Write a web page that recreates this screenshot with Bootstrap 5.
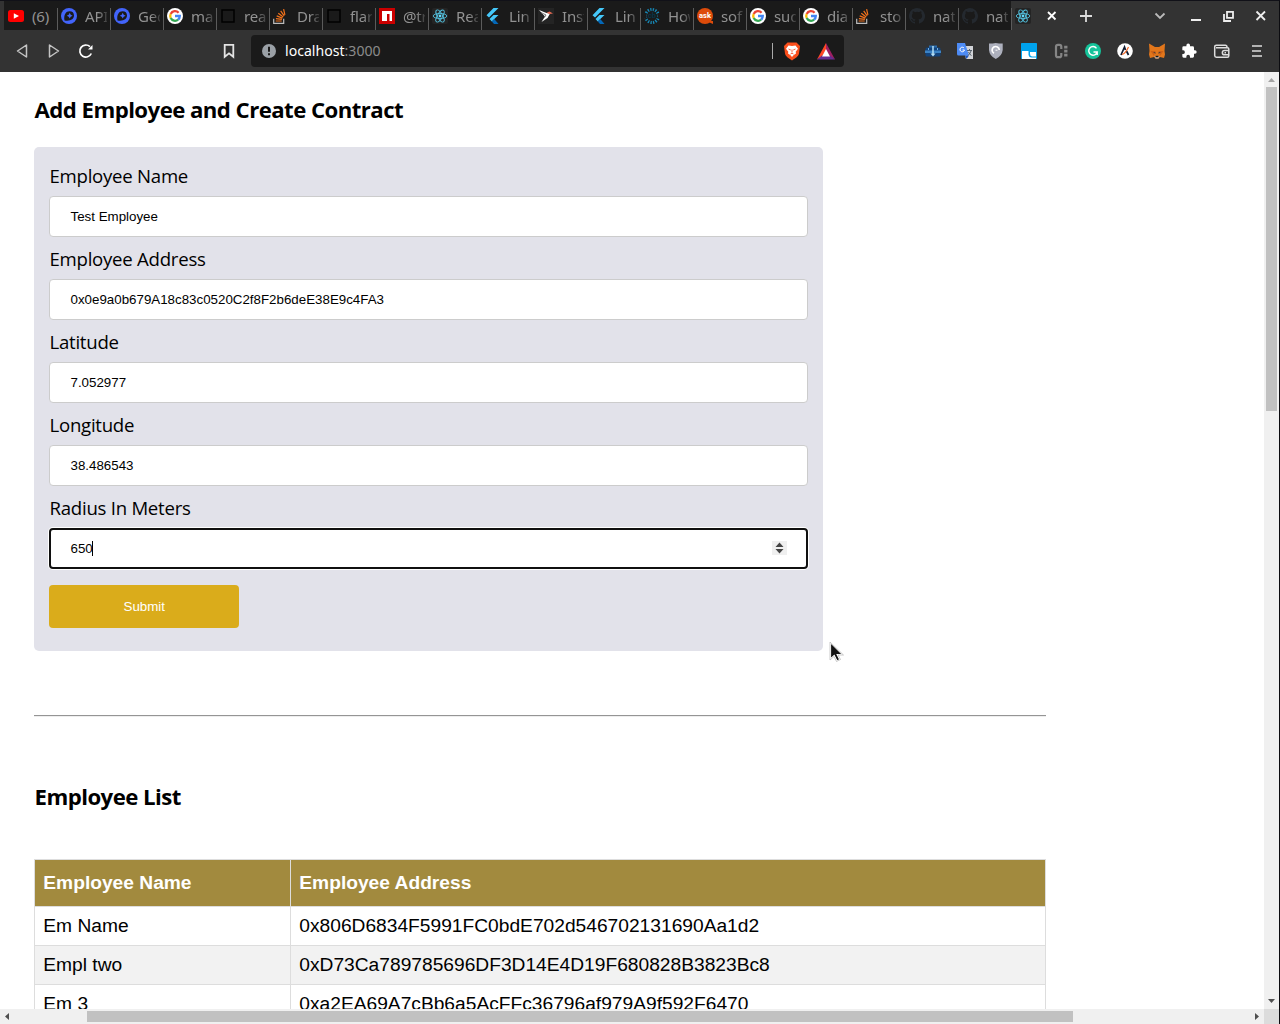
<!DOCTYPE html>
<html lang="en">
<head>
<meta charset="utf-8">
<title>Employee contracts</title>
<link href="https://cdn.jsdelivr.net/npm/bootstrap@5.3.0/dist/css/bootstrap.min.css" rel="stylesheet">
<style>
body{width:1280px;height:1024px;overflow:hidden;background:#333;color:#000;font-family:"Noto Sans",sans-serif}
svg{display:block;flex:none}
.screen{width:1280px;height:1024px;border-top:1px solid #111118;border-right:1px solid #0c0c10}
.tabstrip{height:29px;padding-left:4px;background:#333}
.tabitem{width:53px;height:29px;background:#1a1a1a;padding-left:4px;position:relative;color:#929292;font-size:15px;letter-spacing:-.15px;line-height:28px}
.tabitem:not(:last-child)::after{content:"";position:absolute;right:-1px;top:7px;width:1px;height:22px;background:#5b5b5b;z-index:1}
.tabtext{width:22px;margin-left:8px;overflow:hidden;white-space:nowrap;-webkit-mask-image:linear-gradient(90deg,#000 60%,rgba(0,0,0,.25))}
.tabtext.whole{-webkit-mask-image:none}
.activetab{padding-left:4px;width:268px;height:29px}
.toolbar{height:42px;background:#333}
.address{width:593px;height:32px;margin-left:14px;background:#1a1a1a;border-radius:4px;color:#fff;font-size:14.1px;padding-left:10px}
.address b{font-weight:400;color:#8b8b8b}
.extensions{gap:16px;margin-left:81px}
.viewport{height:937px;background:#fff}
.pagearea{padding:0 0 0 34px;overflow:hidden;width:1264px}
.pagearea h2{font:700 22.2px/30px "Open Sans","Noto Sans",sans-serif;margin:0;padding-left:.6px;white-space:nowrap;letter-spacing:-.55px}
.t1{padding-top:23px!important}
.panel{width:789px;height:504px;margin-top:22px;background:#e2e2ea;border-radius:5px;padding:16px 15px}
.panel label{display:block;font:400 18.6px/26px "Open Sans","Noto Sans",sans-serif;letter-spacing:-.25px;height:26px;margin-bottom:7px;padding-left:.5px}
.field{height:41px;border:1px solid #ccc;border-radius:4px;padding:0 20.5px;margin-bottom:9px;background:#fff;font:13.333px/39px "Liberation Sans",Arial,sans-serif;color:#000}
.field.focused{border:2px solid #101010;padding:0 19.5px;box-shadow:0 0 0 1px #fff}
.caret{width:1px;height:15px;background:#000;margin-left:-1px}
.spin{width:15px;height:14px;background:#efefef;margin-bottom:1px}
.btn-submit{width:190px;height:43px;margin-top:16px;background:#daac1b;color:#fff;border:0;border-radius:4px;padding:0 0 0 .5px;font:13.333px "Liberation Sans",Arial,sans-serif}
.rule{width:1012px;height:2px;margin-top:64px;border-top:1px solid #959595;border-bottom:1px solid #eee}
.t2{margin-top:65px!important}
.emps{width:1012px;margin:47px 0 0;border-collapse:collapse;table-layout:fixed;font:19.2px/22px "Liberation Sans",Arial,sans-serif}
.emps th,.emps td{border:1px solid #ddd;padding:8px 8px 8px 8.3px}
.emps th{background:#a28a3e;color:#fff;padding:12px 8px 12px 8.3px;height:47px}
.emps td{height:39px}
.emps tr:nth-child(even) td{background:#f2f2f2}
.vbar{width:15px;background:#f0f0f0}
.vthumb{width:11px;height:324px;background:#c1c1c1;margin:0 2px}
.hbar{height:15px;background:#f0f0f0}
.pointer{position:absolute;left:829px;top:641px}
.favicon{position:relative;width:16px;height:16px;flex:none}
.favicon span{position:absolute;inset:0;text-align:center;font:700 7.5px/15px Roboto,sans-serif;letter-spacing:0}
.cbtext{color:#073546}
</style>
<script src="https://cdn.jsdelivr.net/npm/bootstrap@5.3.0/dist/js/bootstrap.bundle.min.js"></script>
</head>
<body>
<svg width="0" height="0" class="position-absolute">
<symbol id="yt" viewBox="0 0 16 16"><rect y="2" width="16" height="12" rx="2.500" fill="#f00"/><path d="M5.800 5.200v5.600L11 8z" fill="#fff"/></symbol>
<symbol id="api" viewBox="0 0 16 16"><circle cx="8" cy="8" r="8" fill="#4264fb"/><path d="M3.500 12.500C2.500 6.500 5 3.200 8.600 3.200a4.400 4.400 0 0 1 4.400 4.300C13 11 9.500 13.500 3.500 12.500z" fill="#1a1a1a"/><path d="M8.700 4.800l1 1.900 1.900 1-1.900 1-1 1.900-1-1.900-1.900-1 1.900-1z" fill="#4264fb"/></symbol>
<symbol id="goo" viewBox="0 0 16 16"><circle cx="8" cy="8" r="8" fill="#fff"/><g fill="none" stroke-width="2.300"><path d="M11.600 4.700A4.800 4.800 0 0 0 3.700 5.900" stroke="#ea4335"/><path d="M3.700 5.900a4.800 4.800 0 0 0 0 4.200" stroke="#fbbc05"/><path d="M3.700 10.100a4.800 4.800 0 0 0 7.400 1.600" stroke="#34a853"/><path d="M11.100 11.700A4.800 4.800 0 0 0 12.800 8H8" stroke="#4285f4"/></g></symbol>
<symbol id="sq" viewBox="0 0 16 16"><rect x="2" y="2" width="12" height="12" fill="none" stroke="#000" stroke-width="1.500"/></symbol>
<symbol id="so" viewBox="0 0 16 16"><path d="M.700 10.700v4.600h10v-4.600" fill="none" stroke="#bcbbbb" stroke-width="1.200"/><path d="M2.700 13h6M2.900 10.600l6 .8M3.700 7.900l5.700 2.200M5.300 5.200l4.900 3.800M7.700 2.800l3.500 5M10.600 1.200l1.300 5.600" stroke="#f4731c" stroke-width="1.200"/></symbol>
<symbol id="npm" viewBox="0 0 16 16"><path d="M0 0h16v16H0z" fill="#cb0000"/><path d="M3 3h10v10h-2.500V6H8v7H3z" fill="#fff"/></symbol>
<symbol id="react" viewBox="0 0 16 16"><rect width="16" height="16" rx="2" fill="#242424"/><g fill="none" stroke="#53c1de" stroke-width=".9"><ellipse cx="8" cy="8" rx="6.800" ry="2.600"/><ellipse cx="8" cy="8" rx="6.800" ry="2.600" transform="rotate(60 8 8)"/><ellipse cx="8" cy="8" rx="6.800" ry="2.600" transform="rotate(120 8 8)"/></g><circle cx="8" cy="8" r="1.400" fill="#61dafb"/></symbol>
<symbol id="flut" viewBox="0 0 16 16"><path d="M8.500 0h5L4 9.500 1.500 7.200zM8.500 7h5l-4.200 4L6.800 13.400 4.500 11z" fill="#45c8fa"/><path d="M6.800 13.400L9.300 11l4.200 5H9z" fill="#0468b8"/></symbol>
<symbol id="bird" viewBox="0 0 16 16"><path d="M0 0h16v16H0z" fill="#242424"/><path d="M1 2l7.500 3 3.500.5-2.500 4.500L3.500 14l3.500-5.500z" fill="#fff"/><path d="M8.500 4.700l3-1.200 3.500 2-3.500.5z" fill="#e66a52"/><path d="M3 4.500l5 2.500-1.500 2.500" fill="none" stroke="#777"/></symbol>
<symbol id="cb" viewBox="0 0 16 16"><circle cx="8" cy="8" r="6.500" fill="none" stroke="#1687b5" stroke-width="3" stroke-dasharray="1.300 1.250"/><path d="M0 5.500h2.500v5H0zM13.500 5.500H16v5h-2.500z" fill="#1a1a1a"/></symbol>
<symbol id="ask" viewBox="0 0 16 16"><circle cx="8" cy="8" r="8" fill="#dd4b0a"/><path d="M9 13h7v3z" fill="#dd4b0a"/></symbol>
<symbol id="git" viewBox="0 0 16 16"><path fill="#24292f" d="M8 0C3.580 0 0 3.580 0 8c0 3.540 2.290 6.530 5.470 7.590.4.070.55-.17.55-.38 0-.19-.01-.82-.01-1.490-2.010.37-2.530-.49-2.690-.94-.09-.23-.48-.94-.82-1.130-.28-.15-.68-.52-.01-.53.63-.01 1.080.58 1.230.82.72 1.210 1.870.87 2.330.66.070-.52.28-.87.51-1.070-1.780-.2-3.640-.89-3.640-3.950 0-.87.31-1.590.82-2.150-.08-.2-.36-1.020.08-2.120 0 0 .67-.21 2.200.82a7.600 7.600 0 0 1 4 0c1.530-1.040 2.200-.82 2.200-.82.44 1.100.16 1.920.08 2.120.51.56.82 1.270.82 2.150 0 3.070-1.870 3.750-3.650 3.950.29.25.54.73.54 1.480 0 1.070-.01 1.930-.01 2.200 0 .21.15.46.55.38A8 8 0 0 0 8 0z"/></symbol>
</svg>
<div class="screen d-flex flex-column">
<div class="tabstrip d-flex align-items-center">
<div class="tabitem d-flex align-items-center"><svg width="16" height="16"><use href="#yt"/></svg><span class="tabtext whole">(6)</span></div>
<div class="tabitem d-flex align-items-center"><svg width="16" height="16"><use href="#api"/></svg><span class="tabtext">API</span></div>
<div class="tabitem d-flex align-items-center"><svg width="16" height="16"><use href="#api"/></svg><span class="tabtext">Geo</span></div>
<div class="tabitem d-flex align-items-center"><svg width="16" height="16"><use href="#goo"/></svg><span class="tabtext">ma</span></div>
<div class="tabitem d-flex align-items-center"><svg width="16" height="16"><use href="#sq"/></svg><span class="tabtext">rea</span></div>
<div class="tabitem d-flex align-items-center"><svg width="16" height="16"><use href="#so"/></svg><span class="tabtext">Dra</span></div>
<div class="tabitem d-flex align-items-center"><svg width="16" height="16"><use href="#sq"/></svg><span class="tabtext">flar</span></div>
<div class="tabitem d-flex align-items-center"><svg width="16" height="16"><use href="#npm"/></svg><span class="tabtext">@tr</span></div>
<div class="tabitem d-flex align-items-center"><svg width="16" height="16"><use href="#react"/></svg><span class="tabtext">Rea</span></div>
<div class="tabitem d-flex align-items-center"><svg width="16" height="16"><use href="#flut"/></svg><span class="tabtext">Lin</span></div>
<div class="tabitem d-flex align-items-center"><svg width="16" height="16"><use href="#bird"/></svg><span class="tabtext">Inst</span></div>
<div class="tabitem d-flex align-items-center"><svg width="16" height="16"><use href="#flut"/></svg><span class="tabtext">Lin</span></div>
<div class="tabitem d-flex align-items-center"><div class="favicon"><svg width="16" height="16"><use href="#cb"/></svg><span class="cbtext">cb</span></div><span class="tabtext">How</span></div>
<div class="tabitem d-flex align-items-center"><div class="favicon"><svg width="16" height="16"><use href="#ask"/></svg><span class="text-white">ask</span></div><span class="tabtext">sof</span></div>
<div class="tabitem d-flex align-items-center"><svg width="16" height="16"><use href="#goo"/></svg><span class="tabtext">sud</span></div>
<div class="tabitem d-flex align-items-center"><svg width="16" height="16"><use href="#goo"/></svg><span class="tabtext">dia</span></div>
<div class="tabitem d-flex align-items-center"><svg width="16" height="16"><use href="#so"/></svg><span class="tabtext">sto</span></div>
<div class="tabitem d-flex align-items-center"><svg width="16" height="16"><use href="#git"/></svg><span class="tabtext">nat</span></div>
<div class="tabitem d-flex align-items-center"><svg width="16" height="16"><use href="#git"/></svg><span class="tabtext">nat</span></div>
<div class="activetab d-flex align-items-center">
<svg width="16" height="16"><use href="#react"/></svg>
<svg width="248" height="29" fill="none" stroke="#fff" stroke-width="1.800"><path d="M17 11l7.500 7.500M24.500 11L17 18.500"/><path d="M49 15h12M55 9v12" stroke="#ddd"/><path d="M124.500 12.500l4.500 4.500 4.500-4.500" stroke="#bbb"/><path d="M160 19h10" stroke="#eee" stroke-width="2"/><path d="M196 10.900h6v6h-6zM193 13v7h7" stroke="#eee"/><path d="M225.500 10.500l8.500 8.500M234 10.500l-8.500 8.500" stroke="#eee"/></svg>
</div>
</div>
<div class="toolbar d-flex align-items-center">
<svg width="237" height="42" fill="none" stroke="#c4c4c4" stroke-width="1.500"><path d="M26.500 15v12L17.500 21zM49.500 15v12l9-6z" stroke-linejoin="round"/><path d="M90 16.700A6 6 0 1 0 91.300 23.500" stroke="#fff" stroke-width="1.700"/><path d="M92.500 15v4.500H88z" fill="#fff" stroke="none"/><path d="M224.700 14.800h8.600v12l-4.300-3.500-4.300 3.500z" stroke="#e4e4e4" stroke-width="1.800"/></svg>
<div class="address d-flex align-items-center">
<svg width="16" height="16" viewBox="0 0 16 16"><circle cx="8" cy="8" r="7" fill="#9aa0a6"/><path d="M7 3.800h2v5H7zM7 10.300h2v2H7z" fill="#1a1a1a"/></svg>
<span class="ms-2">localhost<b>:3000</b></span>
<svg class="ms-auto" width="75" height="32"><path d="M3.500 8v16" stroke="#aaa"/><path d="M18.500 7.500h9l3.500 3.500-1 7.500c-.5 3-3.500 4.500-7 7-3.500-2.500-6.500-4-7-7L15 11z" fill="#fb4f1c"/><path d="M19.500 10.500l3.500.6 3.500-.6 2.500 3.200-2.300 3 .3 1.700-2.500 1.800L23 22l-1.500-1.800-2.500-1.800.3-1.700-2.300-3z" fill="#fff"/><path d="M19.500 14l2.300 1M26.500 14l-2.300 1M21.500 19l1.500-.8 1.500.8M23 14.500v3" fill="none" stroke="#fb542b" stroke-width=".9"/><path d="M57 8v7l-4 6.500-5 3z" fill="#ff4724"/><path d="M57 8v7l4 6.500 5 3z" fill="#9e1f63"/><path d="M48 24.500l5-4h8l5 4z" fill="#662d91"/><path d="M57 14l4 7.500h-8z" fill="#fff"/></svg>
</div>
<div class="extensions d-flex align-items-center">
<svg width="16" height="16"><path d="M4 2.500h8V6H4z" fill="#2a6cad"/><rect x=".5" y="4.500" width="15" height="9" rx="1.500" fill="#12437c"/><path d="M0 7.500h16V10H0z" fill="#3b83c6"/><path d="M8 3v9" stroke="#b5e0f7" stroke-width="1.500"/><path d="M3.500 5v2M12.500 5v2" stroke="#6fb0e0"/><path d="M5.500 10.500h5L8 13.500z" fill="#b5e0f7"/></svg>
<svg width="16" height="16"><path d="M6 3h10v13H9z" fill="#d2d4d8"/><path d="M0 0h8l4 12.500H1.500Q0 12.500 0 11z" fill="#4d8bf5"/><path d="M8 12.500h4L9.500 16z" fill="#1a56c4"/><path d="M7 5A2.300 2.300 0 1 0 7.500 7H5.500" stroke="#fff" stroke-width="1" fill="none"/><path d="M10 7.500h5M12.500 6v1.500M14 8q-1 3-3 4.500M11.500 9q1.500 3 3 3.500" stroke="#56616c" fill="none"/></svg>
<svg class="shield" width="16" height="16" viewBox="0 0 16 16"><path d="M0 .5Q4 .5 6.700 0 10 .5 13.700.5V7Q13 13 6.800 16 .5 13 0 7z" fill="#adb0bd"/><path d="M5 10.300A3.600 3.600 0 1 1 10.300 7" fill="none" stroke="#fff" stroke-width="1.700"/><path d="M6.500 7.200h2" stroke="#fff" stroke-width="1"/></svg>
<svg width="16" height="16"><rect width="16" height="16" rx=".7" fill="#00a3ee"/><path d="M1 8h6.500v4q.5 2.500 3 2.500H15V16H1zM9 9h6v4.500h-4Q9 13 9 11z" fill="#fff"/></svg>
<svg width="16" height="16" fill="none" stroke="#858585" stroke-width="2.200"><path d="M8.300 6V3.800Q8.300 1.800 6.500 1.800H5Q3 1.800 3 3.800v8.400q0 2 2 2h1.500q1.800 0 1.800-2V10"/><path d="M12.800 2.800v11" stroke-width="3.300" stroke-dasharray="2.800 1.200"/></svg>
<svg width="16" height="16"><circle cx="8" cy="8" r="8" fill="#15c39a"/><path d="M11.500 5.300A4.300 4.300 0 1 0 12.200 9H8.500M12.200 8.500V12" fill="none" stroke="#fff" stroke-width="1.400"/></svg>
<svg width="16" height="16"><circle cx="8" cy="8" r="7.800" fill="#fff"/><path d="M4 12l3.500-8 1 3M9.500 8l2 4" fill="none" stroke="#111c31" stroke-width="1.700"/><path d="M5 11.500q3.500-1 6.500-7.500" fill="none" stroke="#f36b2b" stroke-width="1.200"/></svg>
<svg width="16" height="16"><path d="M0 .5L6 4h4l6-3.500-.5 7.500.5 3.500-1 3.500-4-1-1.500 1.500h-3L5 14l-4 1-1-3.500L.5 8z" fill="#e2761b"/><path d="M1.500 8h5L5 13zM14.500 8h-5l1.500 5z" fill="#cd6116"/><path d="M4 9l2.500.5v1.300zM12 9l-2.500.5v1.300z" fill="#243040"/><path d="M5.500 13h5L9.500 15.500h-3z" fill="#d6c0b3"/><path d="M6.500 12.800h3v1.500h-3z" fill="#161616"/></svg>
<svg width="16" height="16" viewBox="0 0 24 24"><path fill="#fff" d="M21 11h-1.500V7a2 2 0 0 0-2-2h-4V3.500a2.700 2.700 0 0 0-5.400 0V5H4a2 2 0 0 0-2 2v4h1.500a2.800 2.800 0 0 1 0 5.500H2V20a2 2 0 0 0 2 2h4v-1.500a2.700 2.700 0 0 1 5.500 0V22h4a2 2 0 0 0 2-2v-4H21a2.500 2.500 0 0 0 0-5z"/></svg>
<svg width="18" height="16" fill="none" stroke="#ddd" stroke-width="1.500"><path d="M14 4.500V4q0-1.700-1.700-1.700H3.500Q1.700 2.300 1.700 4v8.500q0 1.700 1.700 1.700H14.500q1.300 0 1.300-1.500V6Q15.800 4.700 14.500 4.700H3M15.800 7.500h-4.300a2 2 0 0 0 0 4.300h4.300M11.500 9.700h1.500"/></svg>
<svg width="16" height="16"><path d="M5 3h10M5 8h9M5 13h10" stroke="#ddd" stroke-width="1.700"/></svg>
</div>
</div>
<div class="viewport d-flex">
<main class="pagearea">
<h2 class="t1">Add Employee and Create Contract</h2>
<section class="panel">
<label>Employee Name</label><div class="field">Test Employee</div>
<label>Employee Address</label><div class="field">0x0e9a0b679A18c83c0520C2f8F2b6deE38E9c4FA3</div>
<label>Latitude</label><div class="field">7.052977</div>
<label>Longitude</label><div class="field">38.486543</div>
<label>Radius In Meters</label><div class="field focused mb-0 d-flex align-items-center">650<span class="caret"></span><span class="spin ms-auto"><svg width="15" height="14"><path d="M3.500 6h8L7.500 1.500zM3.500 8h8l-4 4.500z" fill="#444"/></svg></span></div>
<button class="btn-submit d-block" type="button">Submit</button>
</section>
<div class="rule"></div>
<h2 class="t2">Employee List</h2>
<table class="emps"><colgroup><col style="width:256px"><col></colgroup>
<thead><tr><th>Employee Name</th><th>Employee Address</th></tr></thead>
<tbody><tr><td>Em Name</td><td>0x806D6834F5991FC0bdE702d546702131690Aa1d2</td></tr>
<tr><td>Empl two</td><td>0xD73Ca789785696DF3D14E4D19F680828B3823Bc8</td></tr>
<tr><td>Em 3</td><td>0xa2EA69A7cBb6a5AcFFc36796af979A9f592F6470</td></tr></tbody></table>
</main>
<div class="vbar d-flex flex-column justify-content-between"><div><svg width="15" height="15"><path d="M4 10h7L7.500 6z" fill="#a3a3a3"/></svg><div class="vthumb"></div></div><svg width="15" height="15"><path d="M4 5h7L7.500 9z" fill="#505050"/></svg></div>
</div>
<div class="hbar"><svg width="1279" height="15"><path d="M9 4v7L5 7.500zM1255 4v7l4-3.500z" fill="#505050"/><path d="M87 2h986v11H87z" fill="#c1c1c1"/><path d="M1264 0h15v15h-15z" fill="#dcdcdc"/></svg></div>
</div>
<svg class="pointer" width="16" height="22"><path d="M1.500 1.500v16.500l3.700-3.600 2.800 5.600 2.800-1.400-2.600-5h5.300z" fill="#111" stroke="#fff" stroke-width="1.200"/><path d="M1 1v18l4-3.500 2.500 5 4-2-2.500-4.500h5.500z" stroke="#aaa" stroke-width=".6" fill="none"/></svg>
</body>
</html>
